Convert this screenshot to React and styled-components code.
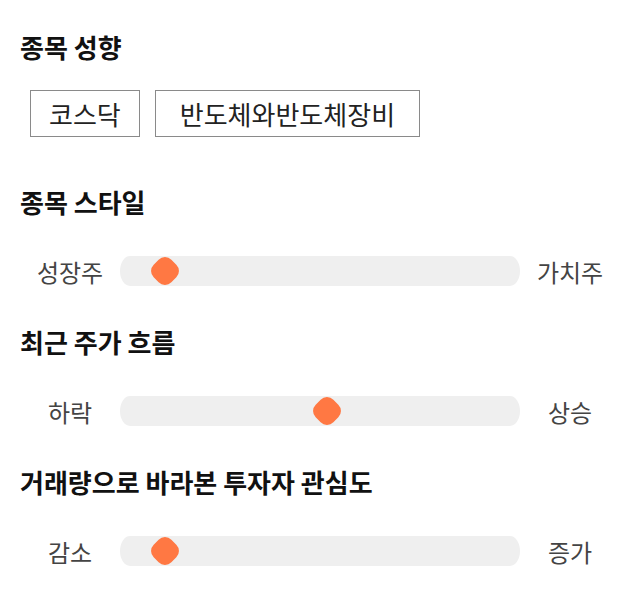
import React from "react";
import styled, { createGlobalStyle } from "styled-components";

const Global = createGlobalStyle`
  html, body { margin: 0; padding: 0; background: #fff; }
  body { font-family: "Noto Sans CJK KR", "Noto Sans", sans-serif; color: #111; }
`;

const Page = styled.div`
  display: flex;
  flex-direction: column;
  padding: 32px 20px 0;
`;

const Section = styled.section`
  display: flex;
  flex-direction: column;
  gap: ${(p) => p.$gap}px;
  margin-bottom: ${(p) => p.$after}px;
`;

const Title = styled.h2`
  margin: 0;
  height: 30px;
  line-height: 30px;
  font-size: 26px;
  font-weight: 700;
  color: #111;
  white-space: nowrap;
`;

const Chips = styled.div`
  display: flex;
  gap: 15px;
  padding-left: 10px;
`;

const Chip = styled.div`
  box-sizing: border-box;
  height: 47px;
  display: flex;
  align-items: center;
  padding: 0 ${(p) => p.$pad}px;
  border: 1px solid #8a8a8a;
  font-size: 26px;
  color: #222;
  white-space: nowrap;
`;

const Row = styled.div`
  display: flex;
  align-items: center;
  height: 30px;
`;

const Label = styled.div`
  width: 100px;
  flex: none;
  text-align: center;
  font-size: 24px;
  color: #444;
`;

const Track = styled.div`
  position: relative;
  flex: 1;
  height: 30px;
  background: #efefef;
  border-radius: 10px / 15px;
`;

const Thumb = styled.div`
  position: absolute;
  top: 50%;
  width: 25px;
  height: 25px;
  background: #ff7843;
  border-radius: 9px;
  transform: translate(-50%, -50%) rotate(45deg);
`;

const sliders = [
  { title: "종목 스타일", left: "성장주", right: "가치주", value: 11.25 },
  { title: "최근 주가 흐름", left: "하락", right: "상승", value: 51.75 },
  { title: "거래량으로 바라본 투자자 관심도", left: "감소", right: "증가", value: 11.25 },
];

export default function App() {
  return (
    <>
      <Global />
      <Page>
        <Section $gap={28} $after={50}>
          <Title>종목 성향</Title>
          <Chips>
            <Chip $pad={18}>코스닥</Chip>
            <Chip $pad={24}>반도체와반도체장비</Chip>
          </Chips>
        </Section>
        {sliders.map((s) => (
          <Section key={s.title} $gap={39} $after={41}>
            <Title>{s.title}</Title>
            <Row>
              <Label>{s.left}</Label>
              <Track>
                <Thumb style={{ left: `${s.value}%` }} />
              </Track>
              <Label>{s.right}</Label>
            </Row>
          </Section>
        ))}
      </Page>
    </>
  );
}
